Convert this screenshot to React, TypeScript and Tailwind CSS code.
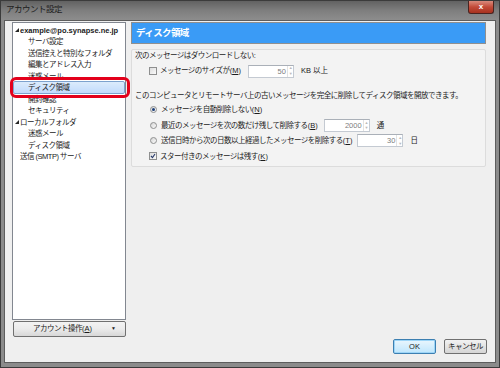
import React from 'react';

type TreeItem = { label: string; level: number; expander?: boolean; bold?: boolean; selected?: boolean };

const treeItems: TreeItem[] = [
  { label: 'example@po.synapse.ne.jp', level: 0, expander: true, bold: true },
  { label: 'サーバ設定', level: 1 },
  { label: '送信控えと特別なフォルダ', level: 1 },
  { label: '編集とアドレス入力', level: 1 },
  { label: '迷惑メール', level: 1 },
  { label: 'ディスク領域', level: 1, selected: true },
  { label: '開封確認', level: 1 },
  { label: 'セキュリティ', level: 1 },
  { label: 'ローカルフォルダ', level: 0, expander: true },
  { label: '迷惑メール', level: 1 },
  { label: 'ディスク領域', level: 1 },
  { label: '送信 (SMTP) サーバ', level: 0 },
];

const Expander = () => (
  <svg width="4" height="4" viewBox="0 0 4 4" className="mr-[1px]">
    <path d="M4 0 L4 4 L0 4 Z" fill="#262626" />
  </svg>
);

// mnemonic "(X)" with the access key underlined
const Mn = ({ k }: { k: string }) => (
  <span className="tracking-normal">
    (<u>{k}</u>)
  </span>
);

const Checkbox = ({ checked }: { checked?: boolean }) => (
  <span className="w-[8px] h-[8px] border border-[#8e8f8f] bg-gradient-to-br from-[#dcdcdc] to-[#fbfbfb] flex items-center justify-center shrink-0">
    {checked && (
      <svg width="6" height="6" viewBox="0 0 6 6">
        <path d="M1 3 L2.5 4.6 L5 1" stroke="#2a3b6b" strokeWidth="1.1" fill="none" />
      </svg>
    )}
  </span>
);

const Radio = ({ checked }: { checked?: boolean }) => (
  <span className="w-[7px] h-[7px] rounded-full border border-[#8e8f8f] bg-gradient-to-br from-[#d6d6d6] to-[#fbfbfb] flex items-center justify-center shrink-0">
    {checked && <span className="w-[3px] h-[3px] rounded-full bg-[#1d3f7a]" />}
  </span>
);

const SpinInput = ({ value, width }: { value: string; width: string }) => (
  <span className={`${width} h-[13px] border border-[#c4cad2] border-t-[#aab0b8] bg-white flex items-stretch shrink-0`}>
    <span className="flex-1 text-right pr-[1px] text-[#7d7d7d] leading-[11px] tracking-normal">{value}</span>
    <span className="w-[6px] border-l border-[#e2e2e2] flex flex-col items-center justify-around text-[#b9b9b9] text-[4px] leading-[4px]">
      <span>▲</span>
      <span>▼</span>
    </span>
  </span>
);

export default function App() {
  return (
    <div className="relative w-[500px] h-[368px] flex flex-col bg-[#8b8b8b] border border-[#3b3b3b] overflow-hidden font-['Liberation_Sans','Noto_Sans_CJK_JP',sans-serif] text-[7.5px] tracking-[-0.5px] text-[#1b1b1b]">
      {/* title bar */}
      <div className="h-[19px] flex items-start bg-gradient-to-b from-[#626262] via-[#7e7e7e] to-[#8d8d8d] relative">
        <span className="pl-[5px] pt-[3px] text-[8.5px] text-[#1c1c1c] leading-[10px]">アカウント設定</span>
        <div className="absolute right-[5px] top-0 w-[26px] h-[13px] rounded-b-[3px] border border-t-0 border-[#4a2420] bg-gradient-to-b from-[#d98a7c] via-[#c24a38] to-[#a7321f] flex items-center justify-center">
          <span className="text-white font-bold text-[8px] leading-[8px] tracking-normal">x</span>
        </div>
      </div>

      {/* client */}
      <div className="mx-[3px] h-[343px] border border-[#5d5d5d] bg-[#efefef] flex flex-col">
        <div className="flex">
          {/* left column */}
          <div className="pl-[7px] pt-[1px] flex flex-col">
            <div className="w-[114px] h-[298px] border border-[#828790] bg-white pt-[1.5px]">
              {treeItems.map((item, i) => (
                <div
                  key={i}
                  className={`relative h-[11.5px] flex items-center ${item.level === 1 ? 'pl-[15px]' : item.expander ? 'pl-[2px]' : 'pl-[7px]'}`}
                >
                  {item.selected && (
                    <span className="absolute left-0 right-0 top-[-1.5px] bottom-[0px] border border-[#7da2ce] bg-gradient-to-b from-[#dcebfc] to-[#c1dbfc] rounded-[2px]" />
                  )}
                  {item.expander && <Expander />}
                  <span className={`relative leading-[11px] whitespace-nowrap ${item.bold ? 'font-bold tracking-[0px]' : ''}`}>{item.label}</span>
                </div>
              ))}
            </div>
            <div className="mt-[1px] w-[113px] ml-[1px] h-[16px] border border-[#707070] rounded-[2px] bg-gradient-to-b from-[#f3f3f3] via-[#ebebeb] to-[#d7d7d7] flex items-center">
              <span className="flex-1 text-center">
                アカウント操作<Mn k="A" />
              </span>
              <span className="w-[14px] text-[5px] text-[#222]">▼</span>
            </div>
          </div>

          {/* right column */}
          <div className="ml-[5px] pt-[1px] w-[355px] flex flex-col">
            <div className="h-[22px] border border-[#8f8f8f] bg-[#3a9bf6] flex items-center pl-[4px]">
              <span className="text-white font-bold text-[9.5px] tracking-[-0.6px]">ディスク領域</span>
            </div>

            <div className="mt-[5px] border border-[#dcdcdc] rounded-[2px] bg-[#f3f3f3] pl-[3px] pr-[3px] pb-[2px]">
              <div className="h-[12px] flex items-center">次のメッセージはダウンロードしない:</div>
              <div className="mt-[2px] h-[14px] flex items-center pl-[14px]">
                <Checkbox />
                <span className="ml-[3px]">メッセージのサイズが<Mn k="M" /></span>
                <span className="ml-[7px]"><SpinInput value="50" width="w-[46px]" /></span>
                <span className="ml-[7px] tracking-normal">KB 以上</span>
              </div>
              <div className="mt-[12px] h-[12px] flex items-center whitespace-nowrap">
                このコンピュータとリモートサーバ上の古いメッセージを完全に削除してディスク領域を開放できます。
              </div>
              <div className="h-[15.5px] flex items-center pl-[15px]">
                <Radio checked />
                <span className="ml-[4px]">メッセージを自動削除しない<Mn k="N" /></span>
              </div>
              <div className="h-[15.5px] flex items-center pl-[15px]">
                <Radio />
                <span className="ml-[4px]">最近のメッセージを次の数だけ残して削除する<Mn k="B" /></span>
                <span className="ml-[6px]"><SpinInput value="2000" width="w-[46px]" /></span>
                <span className="ml-[7px]">通</span>
              </div>
              <div className="h-[15.5px] flex items-center pl-[15px]">
                <Radio />
                <span className="ml-[4px]">送信日時から次の日数以上経過したメッセージを削除する<Mn k="T" /></span>
                <span className="ml-[5px]"><SpinInput value="30" width="w-[46px]" /></span>
                <span className="ml-[7px]">日</span>
              </div>
              <div className="h-[15.5px] flex items-center pl-[14px]">
                <Checkbox checked />
                <span className="ml-[3px]">スター付きのメッセージは残す<Mn k="K" /></span>
              </div>
            </div>
          </div>
        </div>

        {/* dialog buttons */}
        <div className="mt-[2px] flex justify-end gap-[8px] pr-[8px]">
          <div className="w-[43px] h-[15px] rounded-[2px] border border-[#3c7fb1] bg-gradient-to-b from-[#eaf6fd] to-[#bee6fd] flex items-center justify-center shadow-[inset_0_0_0_1px_#9dd5f7] tracking-normal">
            OK
          </div>
          <div className="w-[43px] h-[15px] rounded-[2px] border border-[#707070] bg-gradient-to-b from-[#f2f2f2] to-[#d5d5d5] flex items-center justify-center">
            キャンセル
          </div>
        </div>
      </div>

      {/* annotation highlight */}
      <div className="absolute left-[9px] top-[76px] w-[120px] h-[21px] border-[3px] border-[#e3001b] rounded-[6px]" />
    </div>
  );
}
